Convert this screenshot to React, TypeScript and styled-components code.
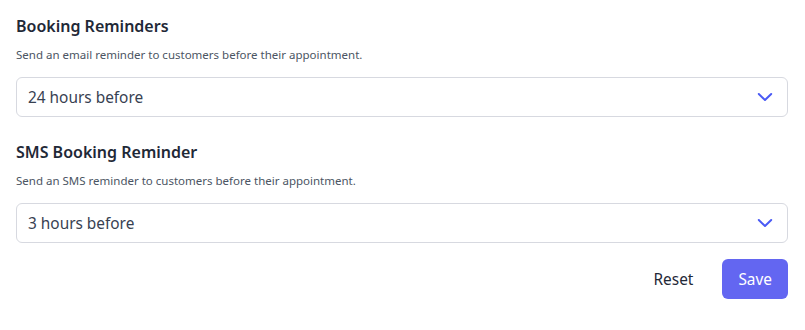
import React from "react";
import styled, { createGlobalStyle } from "styled-components";

const Global = createGlobalStyle`
  html, body { margin: 0; padding: 0; background: #ffffff; }
  body { font-family: "Noto Sans", "Open Sans", sans-serif; }
  * { box-sizing: border-box; }
`;

const Page = styled.div`
  padding: 14px 17px 16px 16px;
  display: flex;
  flex-direction: column;
`;

const Section = styled.section`
  display: flex;
  flex-direction: column;
  margin-bottom: 23px;
`;

const Title = styled.h2`
  margin: 0;
  font-size: 16px;
  line-height: 24px;
  font-weight: 600;
  color: #1f2937;
`;

const Description = styled.p`
  margin: 9px 0 14px;
  font-size: 11.5px;
  line-height: 16px;
  color: #4b5563;
`;

const SelectBox = styled.div`
  height: 40px;
  border: 1px solid #d7d9e0;
  border-radius: 6px;
  display: flex;
  align-items: center;
  justify-content: space-between;
  padding: 0 14px 0 11px;
  font-size: 15.4px;
  color: #374151;
`;

const Actions = styled.div`
  display: flex;
  justify-content: flex-end;
  align-items: center;
  gap: 13px;
  margin-top: -7px;
`;

const Button = styled.button<{ $primary?: boolean }>`
  height: 40px;
  padding: 0 16px;
  border-radius: 6px;
  border: none;
  font-family: inherit;
  font-size: 15.4px;
  cursor: pointer;
  background: ${(p) => (p.$primary ? "#6366f1" : "transparent")};
  color: ${(p) => (p.$primary ? "#ffffff" : "#1f2937")};
`;

const Chevron = () => (
  <svg width="16" height="10" viewBox="0 0 16 10" fill="none" stroke="#4a5af5" strokeWidth="2" strokeLinecap="round" strokeLinejoin="round">
    <path d="M1.8 2 L8 8 L14.2 2" />
  </svg>
);

export default function App() {
  return (
    <>
      <Global />
      <Page>
        <Section>
          <Title>Booking Reminders</Title>
          <Description>Send an email reminder to customers before their appointment.</Description>
          <SelectBox>
            <span>24 hours before</span>
            <Chevron />
          </SelectBox>
        </Section>
        <Section>
          <Title>SMS Booking Reminder</Title>
          <Description>Send an SMS reminder to customers before their appointment.</Description>
          <SelectBox>
            <span>3 hours before</span>
            <Chevron />
          </SelectBox>
        </Section>
        <Actions>
          <Button>Reset</Button>
          <Button $primary>Save</Button>
        </Actions>
      </Page>
    </>
  );
}
